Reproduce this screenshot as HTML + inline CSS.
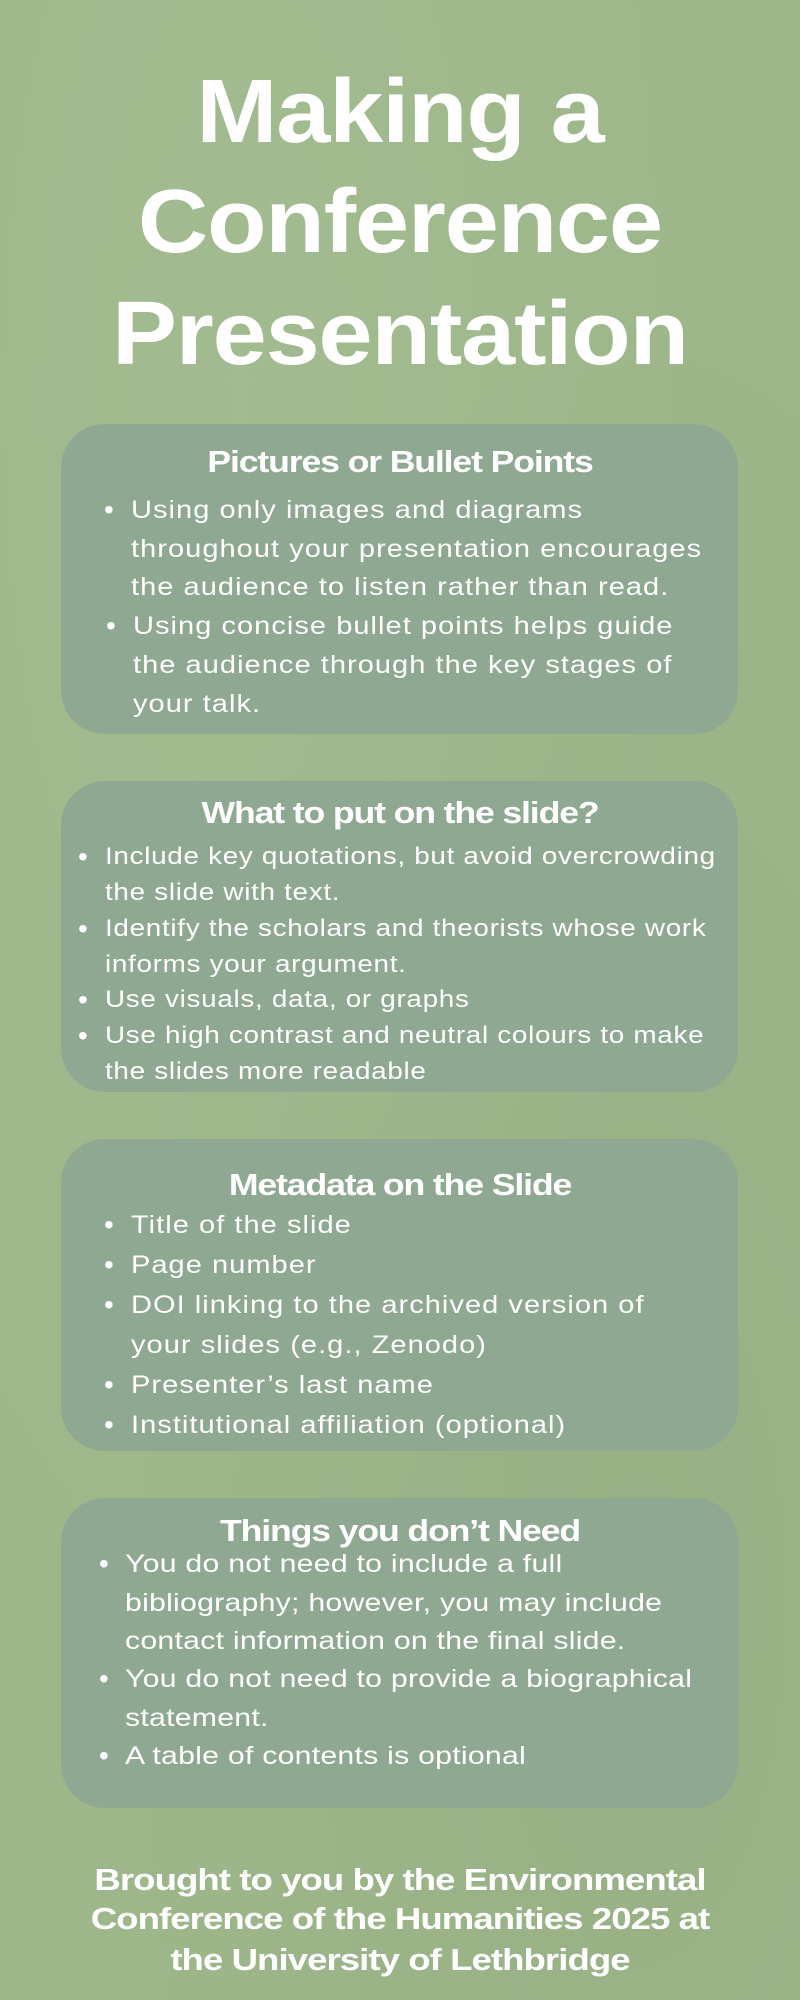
<!DOCTYPE html>
<html><head><meta charset="utf-8"><style>
*{margin:0;padding:0;box-sizing:border-box}
body{width:800px;height:2000px;background:#9db78a;position:relative;overflow:hidden;font-family:"Liberation Sans",sans-serif;color:#fff}
.bg{position:absolute;inset:0;background:radial-gradient(ellipse at 30% 20%,rgba(255,255,255,.05),transparent 60%),radial-gradient(ellipse at 80% 80%,rgba(0,0,0,.04),transparent 60%)}
.t{position:absolute;left:0;width:800px;text-align:center;font-weight:bold;font-size:90px;letter-spacing:-1px;line-height:100px;height:100px;transform:scaleX(1.08)}
.box{position:absolute;left:61px;width:677px;background:#8fa891;border-radius:44px}
.h{position:absolute;left:0;width:800px;text-align:center;font-weight:bold;font-size:31px;letter-spacing:-1px;line-height:40px;height:40px;transform:scaleX(1.15)}
.l{position:absolute;white-space:nowrap;line-height:36px;height:36px;transform:scaleX(1.16);transform-origin:left center}
.k .l{transform:scaleX(1.21)}
.b{position:absolute;font-size:28px;line-height:36px;height:36px}
.f{position:absolute;left:0;width:800px;text-align:center;font-weight:bold;font-size:31px;letter-spacing:-.8px;line-height:40px;height:40px;transform:scaleX(1.18)}
</style></head><body><div class="bg"></div>
<div class="t" style="top:62px">Making a</div>
<div class="t" style="top:172px">Conference</div>
<div class="t" style="top:284px">Presentation</div>

<div class="box" style="top:424px;height:310px"></div>
<div class="h" style="top:442px">Pictures or Bullet Points</div>
<div class="b" style="left:104px;top:492px">•</div>
<div class="l" style="left:131px;top:492px;font-size:25px;letter-spacing:.9px">Using only images and diagrams</div>
<div class="l" style="left:131px;top:531px;font-size:25px;letter-spacing:.9px">throughout your presentation encourages</div>
<div class="l" style="left:131px;top:569px;font-size:25px;letter-spacing:.9px">the audience to listen rather than read.</div>
<div class="b" style="left:106px;top:608px">•</div>
<div class="l" style="left:133px;top:608px;font-size:25px;letter-spacing:.9px">Using concise bullet points helps guide</div>
<div class="l" style="left:133px;top:647px;font-size:25px;letter-spacing:.9px">the audience through the key stages of</div>
<div class="l" style="left:133px;top:686px;font-size:25px;letter-spacing:.9px">your talk.</div>

<div class="box" style="top:781px;height:311px"></div>
<div class="h" style="top:793px">What to put on the slide?</div>
<div class="b" style="left:78px;top:839px">•</div>
<div class="l" style="left:105px;top:839px;font-size:24px;letter-spacing:.6px">Include key quotations, but avoid overcrowding</div>
<div class="l" style="left:105px;top:875px;font-size:24px;letter-spacing:.6px">the slide with text.</div>
<div class="b" style="left:78px;top:911px">•</div>
<div class="l" style="left:105px;top:911px;font-size:24px;letter-spacing:.6px">Identify the scholars and theorists whose work</div>
<div class="l" style="left:105px;top:947px;font-size:24px;letter-spacing:.6px">informs your argument.</div>
<div class="b" style="left:78px;top:982px">•</div>
<div class="l" style="left:105px;top:982px;font-size:24px;letter-spacing:.6px">Use visuals, data, or graphs</div>
<div class="b" style="left:78px;top:1018px">•</div>
<div class="l" style="left:105px;top:1018px;font-size:24px;letter-spacing:.6px">Use high contrast and neutral colours to make</div>
<div class="l" style="left:105px;top:1054px;font-size:24px;letter-spacing:.6px">the slides more readable</div>

<div class="box" style="top:1139px;height:312px"></div>
<div class="h" style="top:1165px">Metadata on the Slide</div>
<div class="b" style="left:104px;top:1207px">•</div>
<div class="l" style="left:131px;top:1207px;font-size:25px;letter-spacing:.9px">Title of the slide</div>
<div class="b" style="left:104px;top:1247px">•</div>
<div class="l" style="left:131px;top:1247px;font-size:25px;letter-spacing:.9px">Page number</div>
<div class="b" style="left:104px;top:1287px">•</div>
<div class="l" style="left:131px;top:1287px;font-size:25px;letter-spacing:.9px">DOI linking to the archived version of</div>
<div class="l" style="left:131px;top:1327px;font-size:25px;letter-spacing:.9px">your slides (e.g., Zenodo)</div>
<div class="b" style="left:104px;top:1367px">•</div>
<div class="l" style="left:131px;top:1367px;font-size:25px;letter-spacing:.9px">Presenter’s last name</div>
<div class="b" style="left:104px;top:1407px">•</div>
<div class="l" style="left:131px;top:1407px;font-size:25px;letter-spacing:.9px">Institutional affiliation (optional)</div>

<div class="box" style="top:1498px;height:310px"></div>
<div class="h" style="top:1511px">Things you don’t Need</div>
<div class="k">
<div class="b" style="left:99px;top:1546px">•</div>
<div class="l" style="left:125px;top:1546px;font-size:25px;letter-spacing:.2px">You do not need to include a full</div>
<div class="l" style="left:125px;top:1585px;font-size:25px;letter-spacing:.2px">bibliography; however, you may include</div>
<div class="l" style="left:125px;top:1623px;font-size:25px;letter-spacing:.2px">contact information on the final slide.</div>
<div class="b" style="left:99px;top:1661px">•</div>
<div class="l" style="left:125px;top:1661px;font-size:25px;letter-spacing:.2px">You do not need to provide a biographical</div>
<div class="l" style="left:125px;top:1700px;font-size:25px;letter-spacing:.2px">statement.</div>
<div class="b" style="left:99px;top:1738px">•</div>
<div class="l" style="left:125px;top:1738px;font-size:25px;letter-spacing:.2px">A table of contents is optional</div>
</div>

<div class="f" style="top:1860px">Brought to you by the Environmental</div>
<div class="f" style="top:1899px">Conference of the Humanities 2025 at</div>
<div class="f" style="top:1940px">the University of Lethbridge</div>
</body></html>
